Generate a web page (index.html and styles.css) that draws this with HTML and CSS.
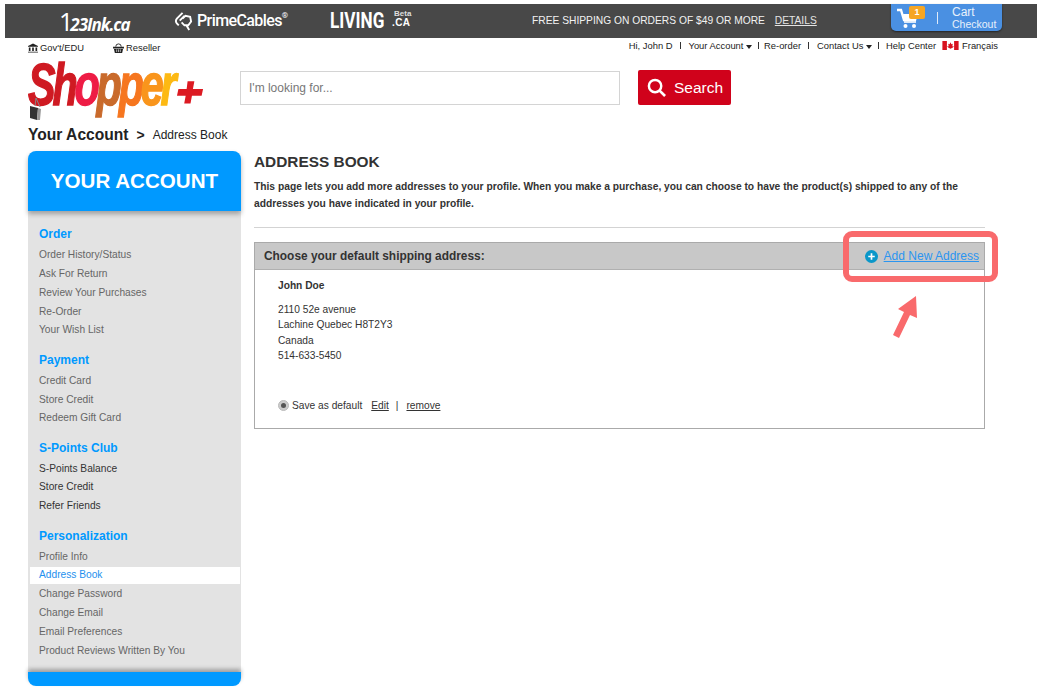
FILE: index.html
```html
<!DOCTYPE html>
<html lang="en">
<head>
<meta charset="utf-8">
<title>Address Book</title>
<link rel="stylesheet" href="styles.css">
</head>
<body>
<div class="page">
  <div class="topbar">
    <div class="brand brand-ink"><span class="ink-one">1</span>23Ink.ca</div>
    <div class="brand brand-prime">
      <svg class="prime-icon" viewBox="0 0 20 22" width="19" height="21"><path d="M9 2 3 8a4 4 0 0 0 0 5l2 2M11 5l-5 5M9 8l3-3 5 1 1 5-3 4h-4l-3-3M13 15l3 5" fill="none" stroke="#fff" stroke-width="2"/></svg>
      <span>PrimeCables</span><sup class="reg">®</sup>
    </div>
    <div class="brand brand-living"><span class="living-main">LIVING</span><span class="living-side"><span class="beta">Beta</span><span class="dotca">.CA</span></span></div>
    <div class="promo">FREE SHIPPING ON ORDERS OF $49 OR MORE <a class="details" href="#">DETAILS</a></div>
    <div class="cart">
      <svg class="cart-icon" viewBox="0 0 22 20" width="22" height="20"><path d="M0 2h4l3 10h11l2-7" fill="none" stroke="#fff" stroke-width="2.4"/><path d="M6 6h14l-2 6H7z" fill="#fff"/><path d="M7 14h12" stroke="#fff" stroke-width="1.6"/><circle cx="8.5" cy="18" r="2" fill="#fff"/><circle cx="17" cy="18" r="2" fill="#fff"/></svg>
      <span class="cart-badge">1</span>
      <span class="cart-sep"></span>
      <span class="cart-text"><span class="cart-l1">Cart</span><span class="cart-l2">Checkout</span></span>
    </div>
  </div>

  <div class="util">
    <div class="util-left">
      <span class="util-item">
        <svg viewBox="0 0 12 11" width="10" height="10"><path d="M6 0 0 3v1h12V3zM1 5h2v4H1zM5 5h2v4H5zM9 5h2v4H9zM0 10h12v1H0z" fill="#222"/></svg>Gov't/EDU</span>
      <span class="util-item util-reseller">
        <svg viewBox="0 0 12 11" width="11" height="10"><path d="M3 4a3 3 0 0 1 6 0" fill="none" stroke="#222"/><path d="M0 4h12v2H0zM1 6.500h10L10 11H2z" fill="#222"/><path d="M4 7v3M6 7v3M8 7v3" stroke="#fff" stroke-width=".7"/></svg>Reseller</span>
    </div>
    <div class="util-right">
      <span>Hi, John D</span><i class="bar"></i>
      <span>Your Account <b class="caret"></b></span><i class="bar bar-tight"></i>
      <span>Re-order</span><i class="bar"></i>
      <span>Contact Us <b class="caret"></b></span><i class="bar bar-last"></i>
      <span>Help Center</span>
      <svg class="flag" viewBox="0 0 18 10" width="17" height="9"><rect width="18" height="10" fill="#fff"/><rect width="5" height="10" fill="#d8121f"/><rect x="13" width="5" height="10" fill="#d8121f"/><path d="M9 1.500 10 3.500l1.500-.5L11 6l1-.5.5 1-2 1.500H9.300V9h-.6V8H7.500l-2-1.500.5-1L7 6 6.500 3 8 3.500z" fill="#d8121f"/></svg>
      <span class="lang">Français</span>
    </div>
  </div>

  <div class="head">
    <div class="logo">
      <span class="logo-word"><span class="c1">Sh</span><span class="c2">o</span><span class="c3">p</span><span class="c4">p</span><span class="c5">e</span><span class="c6">r</span></span>
      <svg class="logo-plus" viewBox="0 0 30 30" width="29" height="30"><path d="M12 4h7l-1.500 8H28l-1.500 7H16.500L15 27H8.500l1.500-8H1l1.500-7H11z" fill="#dc1a22"/></svg>
      <svg class="logo-bag" viewBox="0 0 14 24" width="14" height="24"><path d="M6 9 7 1M11 10 7 1" stroke="#888" fill="none"/><path d="M1 9l8 2-1 12-7-2z" fill="#333"/><path d="M9 11l3 1-1 11-3 0z" fill="#999"/></svg>
    </div>
    <div class="search-input">I'm looking for...</div>
    <div class="search-btn">
      <svg viewBox="0 0 20 20" width="19" height="19"><circle cx="8.500" cy="8.500" r="6.500" fill="none" stroke="#fff" stroke-width="2.600"/><path d="m13 13 6 6" stroke="#fff" stroke-width="2.800"/></svg>
      <span>Search</span>
    </div>
  </div>

  <div class="crumb"><span class="crumb-main">Your Account</span><span class="crumb-sep">&gt;</span><span class="crumb-sub">Address Book</span></div>

  <div class="cols">
    <aside class="side">
      <div class="side-head">YOUR ACCOUNT</div>
      <div class="side-body">
        <h3>Order</h3>
        <a href="#">Order History/Status</a><a href="#">Ask For Return</a><a href="#">Review Your Purchases</a><a href="#">Re-Order</a><a href="#">Your Wish List</a>
        <h3>Payment</h3>
        <a href="#">Credit Card</a><a href="#">Store Credit</a><a href="#">Redeem Gift Card</a>
        <h3>S-Points Club</h3>
        <a class="dark" href="#">S-Points Balance</a><a class="dark" href="#">Store Credit</a><a class="dark" href="#">Refer Friends</a>
        <h3>Personalization</h3>
        <a href="#">Profile Info</a><a class="active" href="#">Address Book</a><a href="#">Change Password</a><a href="#">Change Email</a><a href="#">Email Preferences</a><a href="#">Product Reviews Written By You</a>
      </div>
      <div class="side-foot"></div>
    </aside>

    <main class="main">
      <h1>ADDRESS BOOK</h1>
      <p class="intro">This page lets you add more addresses to your profile. When you make a purchase, you can choose to have the product(s) shipped to any of the addresses you have indicated in your profile.</p>
      <div class="rule"></div>
      <section class="box">
        <div class="box-head">
          <span class="box-title">Choose your default shipping address:</span>
          <span class="add">
            <svg viewBox="0 0 14 14" width="13" height="13"><circle cx="7" cy="7" r="7" fill="#0a97c9"/><path d="M7 3.500v7M3.500 7h7" stroke="#fff" stroke-width="1.800"/></svg>
            <a href="#">Add New Address</a>
          </span>
        </div>
        <div class="box-body">
          <div class="name">John Doe</div>
          <div class="addr">2110 52e avenue<br>Lachine Quebec H8T2Y3<br>Canada<br>514-633-5450</div>
          <div class="actions">
            <span class="radio"></span><span>Save as default</span>
            <a class="edit" href="#">Edit</a><span class="pipe">|</span><a href="#">remove</a>
          </div>
        </div>
      </section>
    </main>
  </div>

  <div class="callout"></div>
  <svg class="arrow" viewBox="0 0 30 44" width="30" height="44"><path d="M25 1 7 14l6 3L2 40l6 3L19 20l7 3z" fill="#f96a6c"/></svg>
</div>
</body>
</html>
```

FILE: styles.css
```css
* { box-sizing: border-box; }
html, body { margin: 0; padding: 0; height: 691px; overflow: hidden; background: #fff; }
body { font-family: "Liberation Sans", Arial, sans-serif; color: #333; font-size: 10.200px; }
a { color: inherit; }

.page { position: relative; padding: 4px 1px 0 5px; height: 691px; }

/* top bar */
.topbar { position: relative; height: 34px; background: #484848; color: #fff; display: flex; align-items: center; padding-left: 54px; }
.brand { color: #fff; white-space: nowrap; }
.brand-ink { width: 115px; font: italic 700 17px/1 "Open Sans", sans-serif; letter-spacing: -1px; }
.ink-one { font-size: 25px; font-style: normal; font-weight: 400; margin-right: -2px; }
.brand-prime { width: 156px; display: flex; align-items: center; gap: 4px; font: 500 16px/1 Roboto, sans-serif; letter-spacing: -.6px; }
.prime-icon { flex: none; }
.reg { font-size: 8px; margin-left: -4px; align-self: flex-start; margin-top: 1px; }
.brand-living { width: 202px; display: flex; align-items: center; gap: 9px; }
.living-main { display: block; width: 53px; font: 700 22px/1 Roboto, sans-serif; transform: scaleX(.78); transform-origin: left center; }
.living-side { display: flex; flex-direction: column; align-items: flex-start; margin-top: -6px; }
.beta { font: 700 8px/9px "Liberation Sans", sans-serif; margin-left: 2px; color: #ddd; }
.dotca { font: 700 10px/10px "Liberation Sans", sans-serif; letter-spacing: .4px; }
.promo { width: 359px; font-size: 10.250px; white-space: nowrap; margin-top: -2px; color: #f2f2f2; }
.details { margin-left: 7px; color: #e4e4e4; }
.cart { height: 27px; width: 111px; align-self: flex-start; background: #4a90e2; border-radius: 0 0 5px 5px; box-shadow: 0 1px 2px rgba(0,0,0,.5); position: relative; display: flex; align-items: center; padding-left: 6px; }
.cart-icon { flex: none; }
.cart-badge { position: absolute; left: 18px; top: 2px; width: 16px; height: 13px; border-radius: 2px; background: #f6a623; color: #fff; font: 700 9px/13px "Liberation Sans", sans-serif; text-align: center; }
.cart-sep { width: 1px; height: 12px; background: #dfeaf8; margin-left: 18px; }
.cart-text { display: flex; flex-direction: column; margin: 1px 0 0 14px; }
.cart-l1 { font-size: 12px; line-height: 12px; color: #e8f1fb; }
.cart-l2 { font-size: 10.500px; line-height: 12px; color: #e8f1fb; }

/* utility row */
.util { height: 16px; display: flex; justify-content: space-between; color: #222; font-size: 9.400px; padding: 1px 0 0 23px; }
.util-left { display: flex; padding-top: 2px; }
.util-item { display: flex; align-items: center; gap: 2px; height: 13px; }
.util-item svg { flex: none; }
.util-reseller { margin-left: 29px; }
.util-right { display: flex; align-items: center; height: 12px; padding-right: 39px; }
.bar { width: 1px; height: 7px; background: #333; margin: 0 8px 0 7px; }
.bar-tight { margin: 0 5px 0 6px; }
.bar-last { margin: 0 7px 0 6px; }
.caret { display: inline-block; width: 0; height: 0; border: 3px solid transparent; border-top: 4px solid #222; border-bottom: 0; vertical-align: 0; }
.flag { margin: 0 3px 0 6px; flex: none; }

/* header */
.head { height: 70px; display: flex; align-items: flex-start; padding-left: 23px; }
.logo { position: relative; width: 212px; height: 66px; flex: none; }
.logo-word { position: absolute; left: 0; top: 0; font: italic 700 59px/62px "Liberation Sans", sans-serif; letter-spacing: -4.500px; white-space: nowrap; transform: scaleX(.7); transform-origin: left center; -webkit-text-stroke: 1.400px; }
.c1 { color: #cf1a22; } .c2 { color: #ee1c45; } .c3 { color: #c96a2b; } .c4 { color: #f6761f; } .c5 { color: #f9951c; } .c6 { color: #fdb913; }
.logo-plus { position: absolute; left: 148px; top: 23px; }
.logo-bag { position: absolute; left: 1px; top: 43px; }
.search-input { width: 380px; height: 34px; margin-top: 17px; border: 1px solid #d4d4d4; background: #fff; color: #777; font-size: 12px; line-height: 32px; padding-left: 8px; }
.search-btn { width: 93px; height: 35px; margin: 16px 0 0 18px; background: #d0021b; border-radius: 2px; color: #fff; font-size: 15.500px; display: flex; align-items: center; gap: 8px; padding-left: 9px; }
.search-btn svg { flex: none; }

/* breadcrumb */
.crumb { height: 27px; padding: 0 0 5px 23px; display: flex; align-items: center; color: #222; }
.crumb-main { font-size: 15.600px; font-weight: 700; }
.crumb-sep { font-size: 14px; font-weight: 700; margin: 0 8px; }
.crumb-sub { font-size: 12px; }

/* columns */
.cols { display: flex; padding-left: 23px; }
.side { width: 213px; flex: none; }
.side-head { height: 60px; background: #0099ff; border-radius: 8px 8px 0 0; color: #fff; font-size: 20.600px; font-weight: 700; text-align: center; line-height: 59px; box-shadow: 0 3px 5px rgba(0,0,0,.3); position: relative; }
.side-body { background: #e3e3e3; height: 461px; padding: 14px 1px 0 2px; }
.side-body h3 { margin: 0; padding-left: 9px; color: #0099ff; font-size: 12px; line-height: 18px; font-weight: 700; height: 20.500px; }
.side-body h3:first-child { height: 21.300px; }
.side-body h3:not(:first-child) { margin-top: 11px; }
.side-body a { display: block; height: 18.800px; line-height: 18.800px; padding-left: 9px; color: #666; text-decoration: none; font-size: 10.200px; }
.side-body a.dark { color: #333; }
.side-body a.active { background: #fff; background-clip: padding-box; border-block: 1px solid transparent; line-height: 16.800px; color: #1e90ee; }
.side-foot { height: 14px; background: #0099ff; border-radius: 0 0 8px 8px; position: relative; box-shadow: 0 -3px 4px rgba(0,0,0,.3); }

.main { width: 731px; margin-left: 13px; color: #333; }
.main h1 { margin: 0; padding-top: 2px; font-size: 15.400px; line-height: 17px; font-weight: 700; color: #333; }
.intro { margin: 8px 0 0; font-size: 10.250px; font-weight: 700; line-height: 17px; width: 720px; color: #333; }
.rule { height: 1px; background: #d3d3d3; margin-top: 15px; }
.box { margin-top: 14px; border: 1px solid #aaa; height: 187px; }
.box-head { height: 27px; background: #c8c8c8; border-bottom: 1px solid #b0b0b0; display: flex; justify-content: space-between; align-items: center; padding: 0 5px 0 9px; }
.box-title { font-size: 11.900px; font-weight: 700; color: #333; }
.add { display: flex; align-items: center; gap: 6px; color: #2b95f0; font-size: 12px; }
.add svg { flex: none; }
.box-body { padding: 9px 0 0 23px; font-size: 10.200px; }
.name { font-weight: 700; line-height: 13px; }
.addr { margin-top: 10px; line-height: 15.400px; }
.actions { margin-top: 35px; display: flex; align-items: center; height: 14px; }
.radio { width: 11px; height: 11px; border-radius: 50%; background: #ccc; border: 1px solid #bbb; margin-right: 3px; position: relative; display: flex; align-items: center; justify-content: center; }
.radio::after { content: ""; width: 5px; height: 5px; border-radius: 50%; background: #555; }
.edit { margin-left: 9px; }
.pipe { margin: 0 8px 0 7px; }

/* annotation overlay */
.callout { position: absolute; left: 843px; top: 231px; width: 155px; height: 51px; border: 6px solid #f96a6c; border-radius: 9px; }
.arrow { position: absolute; left: 891px; top: 295px; }
```
